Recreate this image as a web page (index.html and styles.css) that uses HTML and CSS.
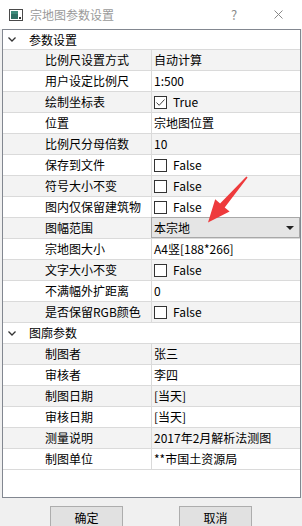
FILE: index.html
```html
<!DOCTYPE html>
<html lang="zh-CN">
<head>
    <meta charset="UTF-8">
    <meta name="viewport" content="width=device-width, initial-scale=1.0">
    <title>宗地图参数设置</title>
    <link rel="stylesheet" href="styles.css">
</head>
<body>
    <div class="window">
        <div class="titlebar">
            <svg class="title-icon" width="14" height="12" viewBox="0 0 14 12">
                <rect x="0.5" y="0.5" width="13" height="11" fill="#fff" stroke="#4a4a4a"/>
                <rect x="2" y="2" width="7" height="8" fill="#2e6f63"/>
                <rect x="2" y="2" width="7" height="3" fill="#3d8a7a"/>
                <rect x="10" y="8" width="2" height="2" fill="#333"/>
            </svg>
            <span class="title">宗地图参数设置</span>
            <span class="help">?</span>
            <svg class="close" width="9" height="9" viewBox="0 0 9 9">
                <path d="M0.5 0.5 L8.5 8.5 M8.5 0.5 L0.5 8.5" stroke="#888" stroke-width="1"/>
            </svg>
        </div>

        <div class="grid">
            <div class="tree">
                <div class="row group first">
                    <svg class="chevron" width="8" height="5" viewBox="0 0 8 5"><path d="M0.5 0.5 L4 4 L7.5 0.5" fill="none" stroke="#333" stroke-width="1.3"/></svg>
                    <span>参数设置</span>
                </div>
                <div class="row"><div class="name">比例尺设置方式</div><div class="value">自动计算</div></div>
                <div class="row"><div class="name">用户设定比例尺</div><div class="value">1:500</div></div>
                <div class="row"><div class="name">绘制坐标表</div><div class="value"><span class="check checked"><svg width="11" height="11" viewBox="0 0 11 11"><path d="M1.5 5.5 L4.2 8.3 L9.5 2.5" fill="none" stroke="#444" stroke-width="1"/></svg></span>True</div></div>
                <div class="row"><div class="name">位置</div><div class="value">宗地图位置</div></div>
                <div class="row"><div class="name">比例尺分母倍数</div><div class="value">10</div></div>
                <div class="row"><div class="name">保存到文件</div><div class="value"><span class="check"></span>False</div></div>
                <div class="row"><div class="name">符号大小不变</div><div class="value"><span class="check"></span>False</div></div>
                <div class="row"><div class="name">图内仅保留建筑物</div><div class="value"><span class="check"></span>False</div></div>
                <div class="row"><div class="name">图幅范围</div><div class="value combo"><span class="combo-text">本宗地</span><span class="combo-arrow"></span></div></div>
                <div class="row"><div class="name">宗地图大小</div><div class="value">A4竖[188*266]</div></div>
                <div class="row"><div class="name">文字大小不变</div><div class="value"><span class="check"></span>False</div></div>
                <div class="row"><div class="name">不满幅外扩距离</div><div class="value">0</div></div>
                <div class="row"><div class="name">是否保留RGB颜色</div><div class="value"><span class="check"></span>False</div></div>
                <div class="row group">
                    <svg class="chevron" width="8" height="5" viewBox="0 0 8 5"><path d="M0.5 0.5 L4 4 L7.5 0.5" fill="none" stroke="#333" stroke-width="1.3"/></svg>
                    <span>图廓参数</span>
                </div>
                <div class="row"><div class="name">制图者</div><div class="value">张三</div></div>
                <div class="row"><div class="name">审核者</div><div class="value">李四</div></div>
                <div class="row"><div class="name">制图日期</div><div class="value">[当天]</div></div>
                <div class="row"><div class="name">审核日期</div><div class="value">[当天]</div></div>
                <div class="row"><div class="name">测量说明</div><div class="value">2017年2月解析法测图</div></div>
                <div class="row"><div class="name">制图单位</div><div class="value">**市国土资源局</div></div>
            </div>
        </div>

        <div class="buttons">
            <button class="btn">确定</button>
            <button class="btn">取消</button>
        </div>

        <!-- red annotation arrow drawn over the grid -->
        <svg class="annotation" width="302" height="526" viewBox="0 0 302 526">
            <polygon points="247.6,177.6 224.7,207.4 229.6,211.6 208,222.5 215.2,199.2 220.1,203.4 246.4,176.4" fill="#ee3a3c"/>
        </svg>
    </div>
</body>
</html>
```

FILE: styles.css
```css
body {
    margin: 0;
    font-family: "Noto Sans CJK SC", "Microsoft YaHei", sans-serif;
    font-size: 12px;
    color: #000;
    background: #f0f0f0;
}
.window {
    position: relative;
    width: 302px;
    height: 526px;
    display: flex;
    flex-direction: column;
    overflow: hidden;
}
.titlebar {
    height: 29px;
    flex: none;
    background: #fff;
    display: flex;
    align-items: center;
    padding: 0 19px 0 9px;
}
.title-icon {
    margin-right: 7px;
}
.title {
    flex: 1;
    color: #9a9a9a;
}
.help {
    width: 12px;
    text-align: center;
    color: #8a8a8a;
    font-size: 13px;
    margin-right: 34px;
}
.grid {
    flex: 1;
    background: #fff;
    border: 1px solid #828790;
    margin: 0 1px 0 2px;
}
.row {
    display: flex;
    height: 20px;
    line-height: 20px;
    border-bottom: 1px solid #dadada;
}
.tree .row:nth-child(even) {
    background: #f3f3f3;
}
.group {
    align-items: center;
    padding-left: 5px;
}
.group.first {
    height: 19px;
}
.chevron {
    margin-right: 13px;
}
.name {
    width: 106px;
    padding-left: 42px;
    border-right: 1px solid #dadada;
    white-space: nowrap;
}
.value {
    flex: 1;
    padding-left: 2px;
    display: flex;
    align-items: center;
    white-space: nowrap;
}
.check {
    width: 11px;
    height: 11px;
    border: 1px solid #333;
    background: #fff;
    margin-right: 6px;
    display: flex;
}
.combo {
    background: #e5e5e5;
    border: 1px solid #a8a8a8;
    margin: -1px 0 0 -1px;
    padding-left: 2px;
}
.combo-text {
    flex: 1;
}
.combo-arrow {
    width: 0;
    height: 0;
    border-left: 4px solid transparent;
    border-right: 4px solid transparent;
    border-top: 4px solid #222;
    margin-right: 5px;
}
.buttons {
    height: 28px;
    flex: none;
    box-sizing: border-box;
    padding: 8px 0 0 50px;
    display: flex;
    align-items: flex-start;
    gap: 56px;
}
.btn {
    width: 73px;
    height: 23px;
    background: #e1e1e1;
    border: 1px solid #adadad;
    font-family: "Noto Sans CJK SC", "Microsoft YaHei", sans-serif;
    font-size: 12px;
    color: #000;
    padding: 0;
}
.annotation {
    position: absolute;
    left: 0;
    top: 0;
    pointer-events: none;
}
```
